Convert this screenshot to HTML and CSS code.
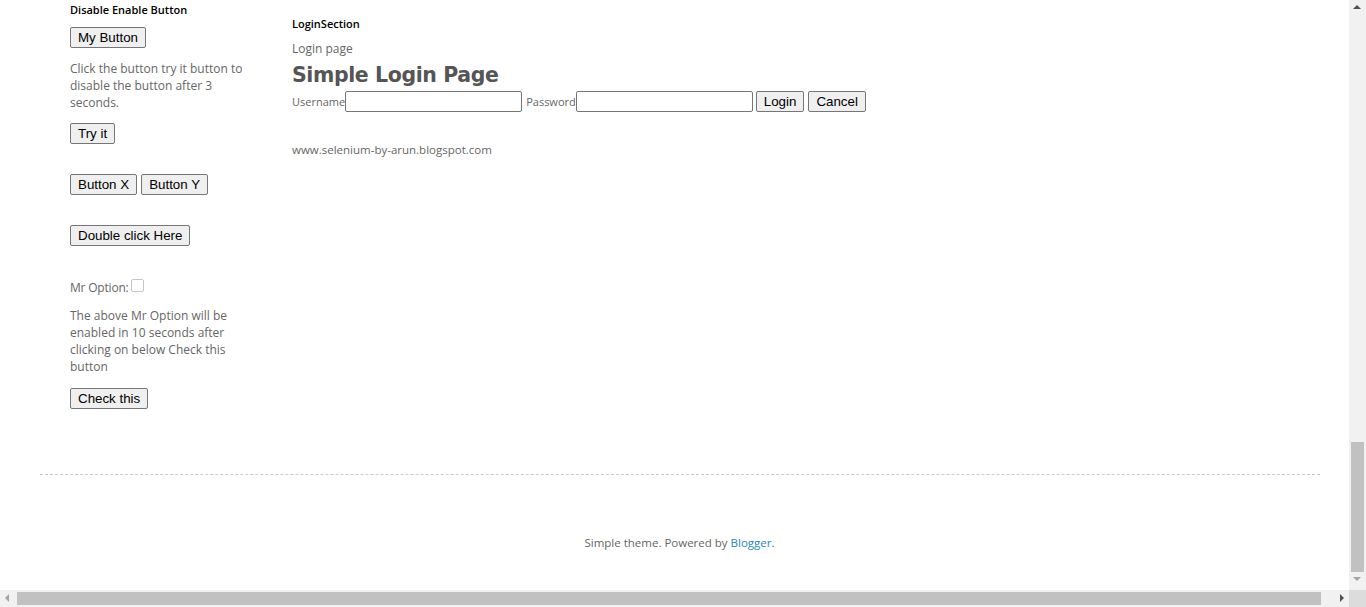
FILE: index.html
```html
<!DOCTYPE html>
<html>
<head>
<meta charset="utf-8">
<link rel="stylesheet" href="styles.css">
</head>
<body>
<div class="page">
  <div class="content">
    <aside class="sidebar">
      <h2 class="title first">Disable Enable Button</h2>
      <button class="btn b-my">My Button</button>
      <p class="txt p1">Click the button try it button to disable the button after 3 seconds.</p>
      <button class="btn">Try it</button>
      <div class="row rx"><button class="btn">Button X</button><button class="btn">Button Y</button></div>
      <div class="row rd"><button class="btn">Double click Here</button></div>
      <div class="opt"><span class="optl">Mr Option:</span><span class="cb"></span></div>
      <p class="txt p2">The above Mr Option will be enabled in 10 seconds after clicking on below Check this button</p>
      <button class="btn">Check this</button>
    </aside>
    <main class="main">
      <h2 class="title">LoginSection</h2>
      <div class="txt lp">Login page</div>
      <h1 class="big">Simple Login Page</h1>
      <div class="form">
        <span class="lbl">Username</span><span class="inp"></span>
        <span class="lbl pw">Password</span><span class="inp"></span>
        <button class="btn login">Login</button><button class="btn cancel">Cancel</button>
      </div>
      <div class="txt url">www.selenium-by-arun.blogspot.com</div>
    </main>
  </div>
  <footer class="footer">Simple theme. Powered by <a>Blogger</a>.</footer>
</div>
<div class="vbar"><span class="up"></span><span class="vthumb"></span><span class="down"></span></div>
<div class="hbar"><span class="left"></span><span class="hthumb"></span><span class="right"></span></div>
<div class="corner"></div>
</body>
</html>
```
FILE: styles.css
```css
html, body { margin: 0; padding: 0; background: #fff; overflow: hidden; }
body { font-family: "Open Sans", "DejaVu Sans", sans-serif; color: #666; font-size: 12px; }
.page { width: 1349px; height: 590px; }
.content { display: flex; height: 475px; box-sizing: border-box; border-bottom: 1px dashed #ccc; margin: 0 29px 0 40px; padding-left: 30px; }
.sidebar { width: 182px; display: flex; flex-direction: column; align-items: flex-start; }
.main { margin-left: 40px; display: flex; flex-direction: column; align-items: flex-start; }
.title { font-size: 11px; font-weight: 600; color: #000; margin: 0; line-height: 14px; }
.first { margin-top: 3px; }
.main .title { margin-top: 17px; }
.txt { font-size: 12px; line-height: 17px; margin: 0; }
.btn { font-family: "Liberation Sans", Arial, sans-serif; font-size: 13.333px; color: #000; background: #efefef; border: 1px solid #767676; border-radius: 2px; height: 21px; padding: 0 7px; margin: 0; line-height: 17px; }
.b-my { margin-top: 10px; }
.p1 { margin-top: 12px; margin-bottom: 12px; }
.row { display: flex; gap: 4px; }
.rx { margin-top: 30px; }
.rd { margin-top: 30px; }
.opt { margin-top: 33px; display: flex; align-items: center; line-height: 17px; }
.optl { letter-spacing: -0.2px; }
.cb { display: inline-block; width: 11px; height: 11px; border: 1px solid #c6c6c6; border-radius: 2px; margin-left: 2px; margin-top: -4px; background: #fff; }
.p2 { margin-top: 11px; margin-bottom: 13px; }
.lp { margin-top: 9px; }
.big { font-family: "Comic Sans MS", "DejaVu Sans", sans-serif; font-weight: bold; font-size: 20.5px; color: #555; margin: 3px 0 0 0; line-height: 31px; letter-spacing: -0.4px; }
.form { display: flex; align-items: center; height: 21px; }
.lbl { font-size: 11px; line-height: 17px; }
.pw { margin-left: 4px; }
.inp { display: inline-block; width: 175px; height: 19px; border: 1px solid #767676; border-radius: 2px; }
.login { margin-left: 3px; }
.cancel { margin-left: 4px; }
.url { margin-top: 29px; font-size: 11.5px; }
.footer { text-align: center; padding-top: 59px; line-height: 17px; font-size: 11.5px; padding-left: 10px; }
.footer a { color: #2288bb; }
.vbar { position: fixed; right: 0; top: 0; width: 17px; height: 590px; background: #f1f1f1; }
.vthumb { position: absolute; left: 2px; top: 442px; width: 13px; height: 130px; background: #c1c1c1; }
.up { position: absolute; left: 4px; top: 5px; border-left: 4px solid transparent; border-right: 4px solid transparent; border-bottom: 4px solid #505050; }
.down { position: absolute; left: 4px; top: 577px; border-left: 4px solid transparent; border-right: 4px solid transparent; border-top: 4px solid #a3a3a3; }
.hbar { position: fixed; left: 0; bottom: 0; width: 1349px; height: 17px; background: #f1f1f1; }
.hthumb { position: absolute; left: 17px; top: 2px; width: 1304px; height: 13px; background: #c1c1c1; }
.left { position: absolute; left: 5px; top: 4px; border-top: 4px solid transparent; border-bottom: 4px solid transparent; border-right: 4px solid #a3a3a3; }
.right { position: absolute; right: 5px; top: 4px; border-top: 4px solid transparent; border-bottom: 4px solid transparent; border-left: 4px solid #505050; }
.corner { position: fixed; right: 0; bottom: 0; width: 17px; height: 17px; background: #dcdcdc; }
```
